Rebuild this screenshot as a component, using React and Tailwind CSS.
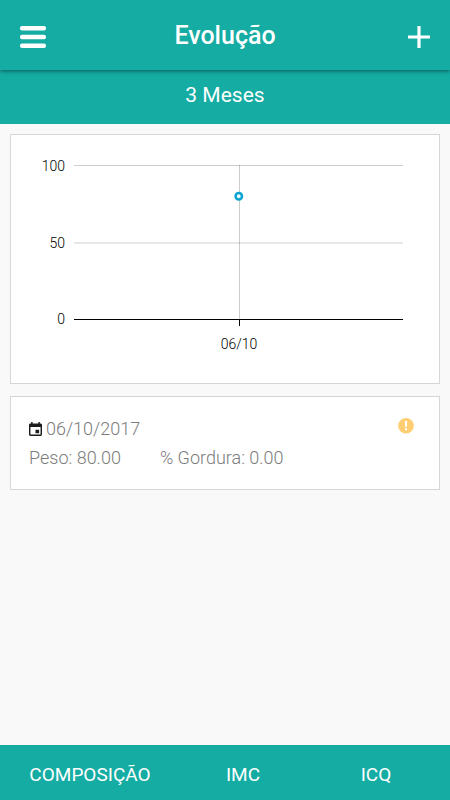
const levels = [
  { value: 100, y: 30.5 },
  { value: 50, y: 108 },
];

const tabs = ["COMPOSIÇÃO", "IMC", "ICQ"];

function MenuIcon() {
  return (
    <svg viewBox="0 0 26 22" className="h-[22px] w-[26px]" fill="currentColor" aria-hidden="true">
      <rect x="0" y="0" width="26" height="4.4" rx="2" />
      <rect x="0" y="8.8" width="26" height="4.4" rx="2" />
      <rect x="0" y="17.4" width="26" height="4.6" rx="2" />
    </svg>
  );
}

function PlusIcon() {
  return (
    <svg viewBox="0 0 22 22" className="size-[22px]" fill="currentColor" aria-hidden="true">
      <path d="M9.4 0h3.2v9.4H22v3.2h-9.4V22H9.4v-9.4H0V9.4h9.4z" />
    </svg>
  );
}

function CalendarIcon() {
  return (
    <svg viewBox="3 1 18 20" className="h-[14px] w-[13px] text-[#1c1c1c]" fill="currentColor" preserveAspectRatio="none" aria-hidden="true">
      <path d="M17 12h-5v5h5v-5zM16 1v2H8V1H6v2H5c-1.11 0-1.99.9-1.99 2L3 19c0 1.1.89 2 2 2h14c1.1 0 2-.9 2-2V5c0-1.1-.9-2-2-2h-1V1h-2zm3 18H5V8h14v11z" />
    </svg>
  );
}

function AlertIcon() {
  return (
    <svg viewBox="0 0 16 16" className="size-4" aria-hidden="true">
      <circle cx="8" cy="7.8" r="7.8" fill="#ffce73" />
      <path d="M6.9 3h2.2L8.9 9H7.1zM7 10.3h2v2H7z" fill="#fff" />
    </svg>
  );
}

function WeightChart() {
  return (
    <svg viewBox="0 0 428 248" className="block w-full font-light" role="img" aria-label="Peso" fontSize="14" fill="#000">
      {levels.map((level) => (
        <g key={level.value}>
          <text x="54" y={level.y + 5} textAnchor="end">{level.value}</text>
          <line x1="63" x2="392" y1={level.y} y2={level.y} stroke="#cfcfcf" />
        </g>
      ))}
      <line x1="228.5" x2="228.5" y1="30" y2="184" stroke="#000" strokeOpacity="0.2" />
      <text x="54" y="189" textAnchor="end">0</text>
      <line x1="63" x2="392" y1="184.5" y2="184.5" stroke="#000" />
      <line x1="228.5" x2="228.5" y1="184" y2="191" stroke="#000" />
      <text x="228" y="214" textAnchor="middle">06/10</text>
      <circle cx="227.8" cy="61.2" r="3.2" fill="#fff" stroke="#0aa5d0" strokeWidth="2.6" />
    </svg>
  );
}

export default function App() {
  return (
    <div className="flex min-h-screen flex-col bg-[#f9f9f9] font-[Roboto,sans-serif]">
      <header className="relative grid h-[70px] grid-cols-[1fr_auto_1fr] items-center bg-[#14aca3] px-5 pt-1 text-white shadow-[0_1px_4px_rgba(0,0,0,0.5)]">
        <button type="button" aria-label="Menu" className="justify-self-start">
          <MenuIcon />
        </button>
        <h1 className="pb-[2px] text-[25px] leading-8 font-medium">Evolução</h1>
        <button type="button" aria-label="Adicionar" className="justify-self-end">
          <PlusIcon />
        </button>
      </header>
      <button type="button" className="h-[54px] bg-[#14aca3] pb-1 text-[21px] leading-7 text-white">
        3 Meses
      </button>

      <main className="flex flex-1 flex-col gap-3 px-[10px] py-[10px]">
        <section className="border border-[#d6d6d6] bg-white">
          <WeightChart />
        </section>

        <section className="flex items-start justify-between border border-[#d6d6d6] bg-white py-[17px] pr-[25px] pl-[18px] text-lg font-light text-[#7c7c7c]">
          <div>
            <div className="flex h-[29px] items-center gap-1">
              <CalendarIcon />
              <time dateTime="2017-10-06">06/10/2017</time>
            </div>
            <div className="flex h-[29px] items-center gap-[39px]">
              <span>Peso: 80.00</span>
              <span>% Gordura: 0.00</span>
            </div>
          </div>
          <button type="button" aria-label="Aviso" className="pt-1">
            <AlertIcon />
          </button>
        </section>
      </main>

      <nav className="grid h-[55px] grid-cols-[180fr_126fr_140fr] bg-[#14aca3] pt-1 pr-1 text-[19px] leading-7 text-white">
        {tabs.map((tab) => (
          <button key={tab} type="button">
            {tab}
          </button>
        ))}
      </nav>
    </div>
  );
}
